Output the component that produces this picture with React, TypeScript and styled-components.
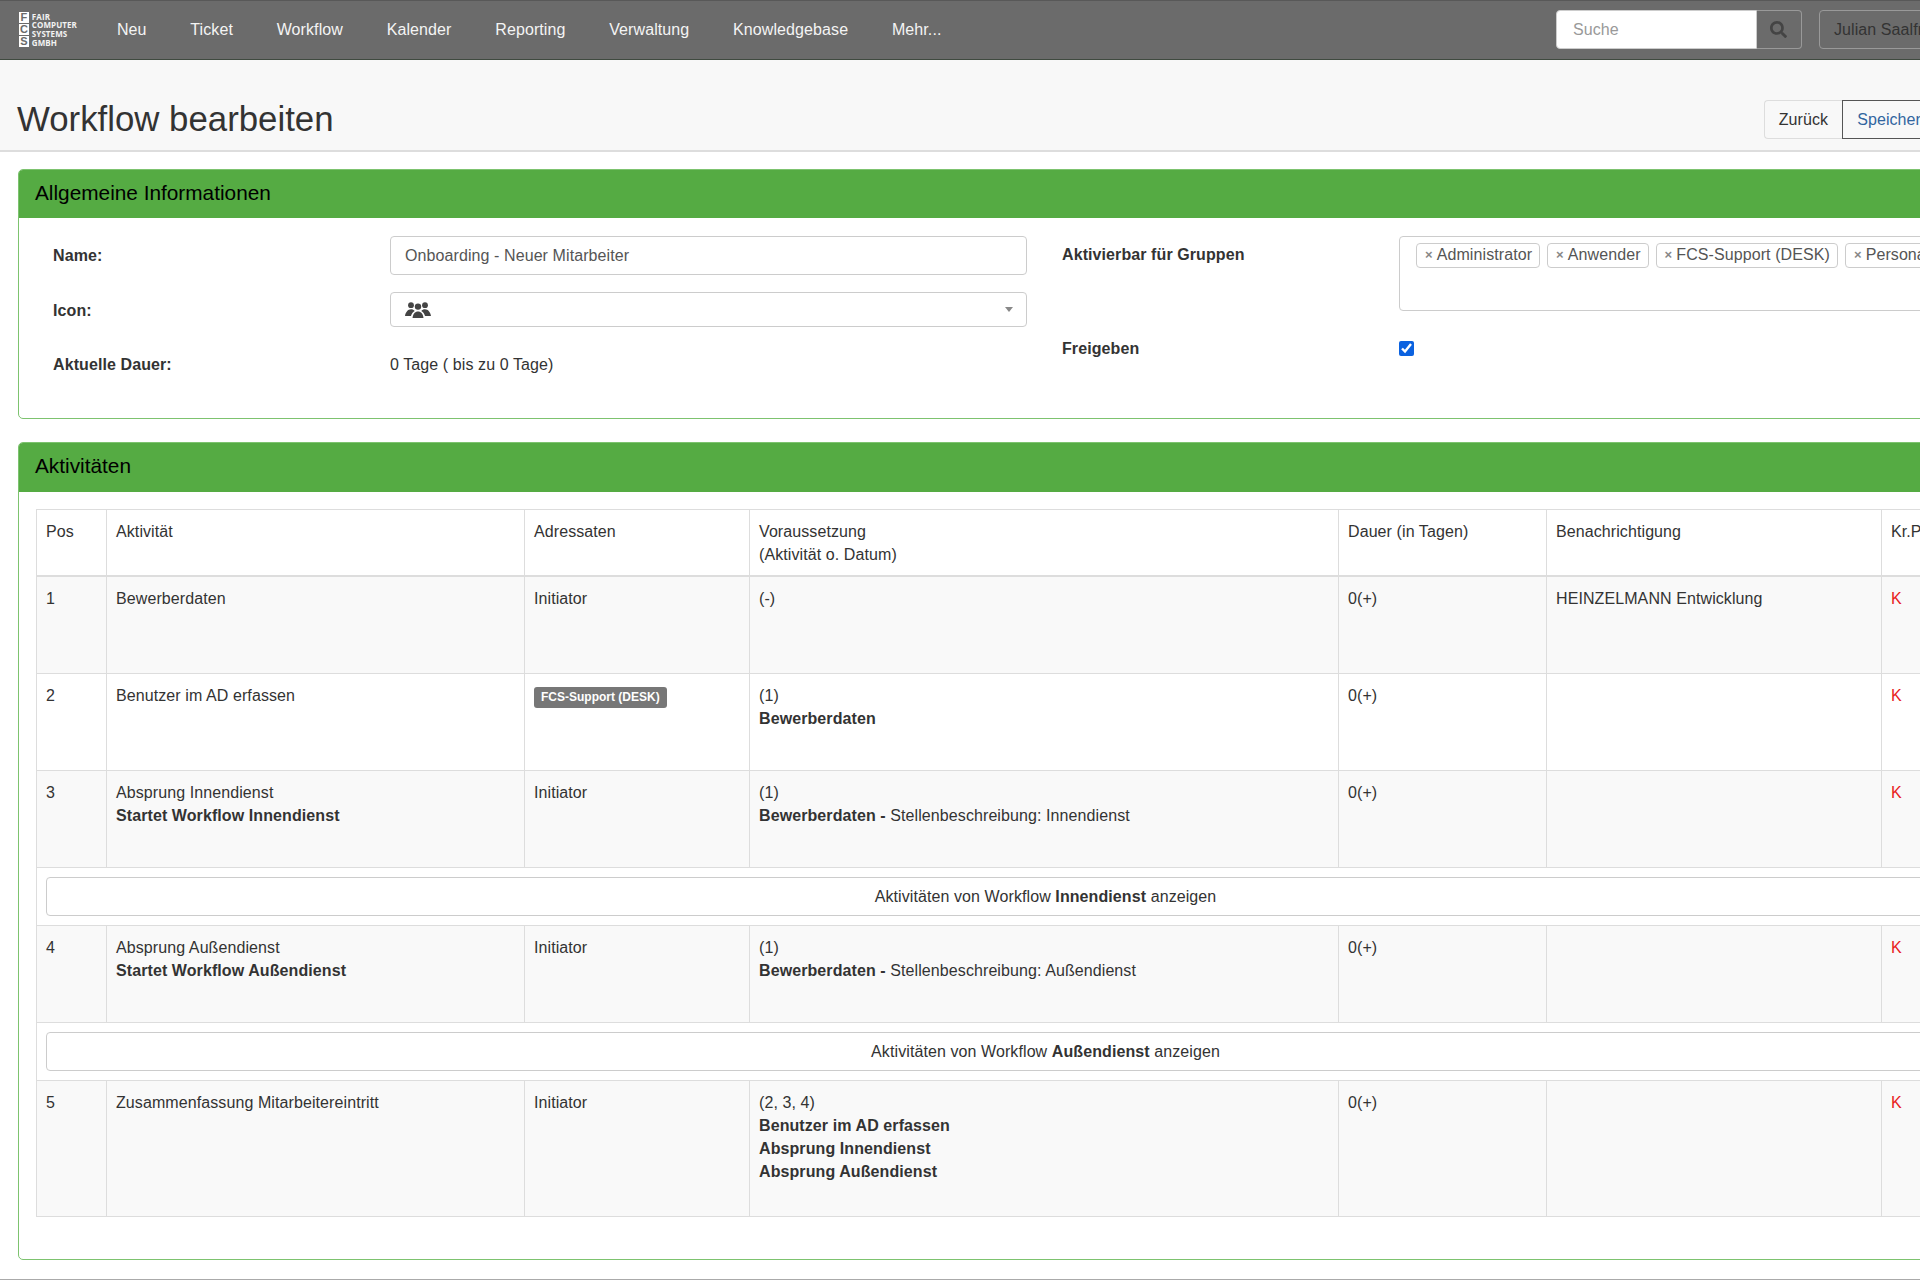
import React from "react";
import styled, { createGlobalStyle } from "styled-components";
import { FaSearch } from "react-icons/fa";

const GlobalStyle = createGlobalStyle`
  html, body {
    margin: 0;
    height: 1280px;
    overflow: hidden;
    background: #fff;
  }
  body {
    font-family: "Liberation Sans", Arial, sans-serif;
    font-size: 16px;
    line-height: 23px;
    letter-spacing: 0.09px;
    color: #333;
  }
  * { box-sizing: border-box; }
`;

const Page = styled.div`
  width: 2090px;
`;

const Navbar = styled.nav`
  display: flex;
  align-items: center;
  height: 60px;
  padding: 0 15px 1px 19px;
  background: #6b6b6b;
  border-top: 1px solid #585858;
  border-bottom: 1px solid #3f4a3f;
`;

const Logo = styled.div`
  display: flex;
  gap: 3px;
  width: 58px;
  margin-right: 18px;
`;

const LogoBlocks = styled.div`
  display: flex;
  flex-direction: column;
  width: 12px;
  gap: 1px;
`;

const LogoBlock = styled.span`
  display: block;
  height: 11px;
  background: #fff;
  color: #6b6b6b;
  font-size: 11px;
  line-height: 11px;
  font-weight: 700;
  text-align: center;
`;

const LogoText = styled.div`
  color: #f2f2f2;
  font-family: "Open Sans", sans-serif;
  font-size: 8px;
  line-height: 8.7px;
  font-weight: 700;
  white-space: nowrap;
  padding-top: 1px;
`;

const NavLink = styled.a`
  padding: 0 21.9px 1px;
  color: #f4f4f4;
  text-decoration: none;
`;

const NavRight = styled.div`
  display: flex;
  margin-left: auto;
`;

const SearchInput = styled.div`
  width: 201px;
  height: 39px;
  padding: 7px 16px;
  background: #fff;
  color: #999;
  border: 1px solid #ccc;
  border-radius: 4px 0 0 4px;
`;

const SearchButton = styled.div`
  display: flex;
  align-items: center;
  justify-content: center;
  width: 45px;
  height: 39px;
  color: #444;
  border: 1px solid #999;
  border-left: 0;
  border-radius: 0 4px 4px 0;
`;

const UserButton = styled.div`
  height: 39px;
  margin-left: 17px;
  padding: 7px 14px;
  color: #333;
  border: 1px solid #999;
  border-radius: 4px;
  white-space: nowrap;
`;

const PageHeader = styled.header`
  display: flex;
  align-items: center;
  justify-content: space-between;
  height: 92px;
  padding: 29px 145px 0 17px;
  background: #f8f8f8;
  border-bottom: 2px solid #ddd;
`;

const Title = styled.h1`
  margin: 0 0 2px;
  font-size: 34.8px;
  font-weight: 400;
  line-height: 40px;
  letter-spacing: 0;
  color: #333;
`;

const ButtonGroup = styled.div`
  display: flex;
`;

const HeaderButton = styled.div<{ $primary?: boolean }>`
  height: 39px;
  padding: 7px 14px;
  background: #f8f8f8;
  color: ${(p) => (p.$primary ? "#31659f" : "#333")};
  border: 1px solid ${(p) => (p.$primary ? "#555" : "#ddd")};
  border-radius: ${(p) => (p.$primary ? "0" : "4px 0 0 4px")};
  ${(p) => (p.$primary ? "" : "border-right: 0;")}
`;

const Panel = styled.section<{ $top: number }>`
  margin: ${(p) => p.$top}px 18px 0;
  border: 1px solid #7dc36f;
  border-radius: 5px;
  overflow: hidden;
`;

const PanelHeading = styled.div<{ $h: number }>`
  height: ${(p) => p.$h}px;
  padding: 11px 16px;
  background: #55ab43;
  color: #000;
  font-size: 20.8px;
  line-height: 24px;
  letter-spacing: 0;
`;

const FormBody = styled.div`
  display: grid;
  grid-template-columns: 974px 638px;
  column-gap: 35px;
  height: 200px;
  padding: 18px 0 0 34px;
`;

const FormColumn = styled.div`
  display: flex;
  flex-direction: column;
`;

const FormRow = styled.div<{ $gap?: number }>`
  display: grid;
  grid-template-columns: 337px 1fr;
  align-items: center;
  margin-bottom: ${(p) => p.$gap ?? 0}px;
`;

const FormLabel = styled.label<{ $top?: boolean; $shift?: number }>`
  font-weight: 700;
  align-self: ${(p) => (p.$top ? "start" : "center")};
  margin-top: ${(p) => (p.$top ? "7px" : `${p.$shift ?? 0}px`)};
`;

const TextInput = styled.div`
  height: 39px;
  padding: 7px 14px;
  color: #555;
  border: 1px solid #ccc;
  border-radius: 4px;
`;

const SelectBox = styled.div`
  display: flex;
  align-items: center;
  justify-content: space-between;
  height: 35px;
  padding: 0 13px 0 14px;
  color: #444;
  border: 1px solid #ccc;
  border-radius: 4px;
`;

const Caret = styled.span`
  width: 0;
  height: 0;
  border-left: 4px solid transparent;
  border-right: 4px solid transparent;
  border-top: 5px solid #888;
`;

const TagBox = styled.div`
  display: flex;
  align-items: flex-start;
  gap: 7px;
  height: 75px;
  padding: 6px 16px;
  border: 1px solid #ccc;
  border-radius: 4px;
`;

const Tag = styled.span`
  display: flex;
  align-items: center;
  gap: 4px;
  height: 25px;
  padding: 0 7px 2px 8px;
  color: #555;
  border: 1px solid #ccc;
  border-radius: 4px;
  white-space: nowrap;
`;

const TagRemove = styled.span`
  color: #888;
  font-size: 13px;
  font-weight: 700;
`;

const Checkbox = styled.input`
  width: 15px;
  height: 15px;
  margin: 0;
  accent-color: #0b62e0;
`;

const ActivityBody = styled.div`
  padding: 17px 17px 42px 17px;
`;

const Table = styled.table`
  width: 2018px;
  table-layout: fixed;
  border-collapse: collapse;
`;

const Col = styled.col<{ $w: number }>`
  width: ${(p) => p.$w}px;
`;

const HeadRow = styled.tr`
  height: 66px;
`;

const Th = styled.th`
  padding: 10px 9px 0;
  font-weight: 400;
  text-align: left;
  vertical-align: top;
  border: 1px solid #ddd;
  border-bottom: 2px solid #ddd;
`;

const Row = styled.tr<{ $striped?: boolean; $h: number }>`
  height: ${(p) => p.$h}px;
  background: ${(p) => (p.$striped ? "#f9f9f9" : "#fff")};
`;

const Td = styled.td`
  padding: 10px 9px 0;
  vertical-align: top;
  border: 1px solid #ddd;
`;

const SubCell = styled.td`
  padding: 9px;
  border: 1px solid #ddd;
`;

const WorkflowButton = styled.div`
  height: 39px;
  padding: 7px 0;
  text-align: center;
  background: #fff;
  border: 1px solid #ccc;
  border-radius: 4px;
`;

const Badge = styled.span`
  display: inline-block;
  height: 21px;
  margin-top: 1px;
  padding: 0 7px;
  background: #777;
  color: #fff;
  font-size: 12px;
  line-height: 20px;
  font-weight: 700;
  letter-spacing: 0;
  border-radius: 3px;
`;

const Critical = styled.span`
  color: #e8211d;
`;

const Footer = styled.footer`
  margin-top: 19px;
  height: 10px;
  border-top: 1px solid #aaa;
`;

const navItems = ["Neu", "Ticket", "Workflow", "Kalender", "Reporting", "Verwaltung", "Knowledgebase", "Mehr..."];
const groups = ["Administrator", "Anwender", "FCS-Support (DESK)", "Personalabteilung"];
const colWidths = [70, 418, 225, 589, 208, 335, 173];

// fa-users as it appears in the icon picker, wider and flatter than the package one
const UsersIcon: React.FC = () => (
  <svg width="26" height="16" viewBox="0 0 26 16" fill="currentColor">
    <circle cx="6" cy="3.2" r="2.9" />
    <circle cx="20" cy="3.2" r="2.9" />
    <circle cx="13" cy="4.6" r="3.2" />
    <path d="M0 14c.6-4 3-6.8 6-6.8 1.6 0 2.8.6 3.7 1.7C7.6 10.2 6.4 12 6 14z" />
    <path d="M26 14c-.6-4-3-6.8-6-6.8-1.6 0-2.8.6-3.7 1.7 2.1 1.3 3.3 3.1 3.7 5.1z" />
    <path d="M7.5 16c.3-4 2.5-6.6 5.5-6.6s5.2 2.6 5.5 6.6z" />
  </svg>
);

interface Activity {
  pos: number;
  name: string;
  starts?: string;
  addressee: React.ReactNode;
  prereq: string;
  prereqNames: string[];
  prereqNote?: string;
  notify?: string;
  height: number;
  striped: boolean;
  subWorkflow?: string;
}

const activities: Activity[] = [
  { pos: 1, name: "Bewerberdaten", addressee: "Initiator", prereq: "(-)", prereqNames: [], notify: "HEINZELMANN Entwicklung", height: 98, striped: true },
  { pos: 2, name: "Benutzer im AD erfassen", addressee: <Badge>FCS-Support (DESK)</Badge>, prereq: "(1)", prereqNames: ["Bewerberdaten"], height: 97, striped: false },
  {
    pos: 3,
    name: "Absprung Innendienst",
    starts: "Startet Workflow Innendienst",
    addressee: "Initiator",
    prereq: "(1)",
    prereqNames: ["Bewerberdaten"],
    prereqNote: "Stellenbeschreibung: Innendienst",
    height: 97,
    striped: true,
    subWorkflow: "Innendienst",
  },
  {
    pos: 4,
    name: "Absprung Außendienst",
    starts: "Startet Workflow Außendienst",
    addressee: "Initiator",
    prereq: "(1)",
    prereqNames: ["Bewerberdaten"],
    prereqNote: "Stellenbeschreibung: Außendienst",
    height: 97,
    striped: true,
    subWorkflow: "Außendienst",
  },
  {
    pos: 5,
    name: "Zusammenfassung Mitarbeitereintritt",
    addressee: "Initiator",
    prereq: "(2, 3, 4)",
    prereqNames: ["Benutzer im AD erfassen", "Absprung Innendienst", "Absprung Außendienst"],
    height: 136,
    striped: true,
  },
];

const ActivityRows: React.FC<{ item: Activity }> = ({ item }) => (
  <>
    <Row $striped={item.striped} $h={item.height}>
      <Td>{item.pos}</Td>
      <Td>
        {item.name}
        {item.starts && (
          <>
            <br />
            <b>{item.starts}</b>
          </>
        )}
      </Td>
      <Td>{item.addressee}</Td>
      <Td>
        {item.prereq}
        {item.prereqNames.map((n) => (
          <React.Fragment key={n}>
            <br />
            <b>{n}</b>
          </React.Fragment>
        ))}
        {item.prereqNote && (
          <>
            <b> - </b>
            {item.prereqNote}
          </>
        )}
      </Td>
      <Td>0(+)</Td>
      <Td>{item.notify}</Td>
      <Td>
        <Critical>K</Critical>
      </Td>
    </Row>
    {item.subWorkflow && (
      <tr>
        <SubCell colSpan={7}>
          <WorkflowButton>
            Aktivitäten von Workflow <b>{item.subWorkflow}</b> anzeigen
          </WorkflowButton>
        </SubCell>
      </tr>
    )}
  </>
);

const App: React.FC = () => {
  return (
    <Page>
      <GlobalStyle />
      <Navbar>
        <Logo>
          <LogoBlocks>
            <LogoBlock>F</LogoBlock>
            <LogoBlock>C</LogoBlock>
            <LogoBlock>S</LogoBlock>
          </LogoBlocks>
          <LogoText>
            FAIR
            <br />
            COMPUTER
            <br />
            SYSTEMS
            <br />
            GMBH
          </LogoText>
        </Logo>
        {navItems.map((item) => (
          <NavLink key={item}>{item}</NavLink>
        ))}
        <NavRight>
          <SearchInput>Suche</SearchInput>
          <SearchButton>
            <FaSearch size={17} />
          </SearchButton>
          <UserButton>Julian Saalfrank (Administrator)</UserButton>
        </NavRight>
      </Navbar>

      <PageHeader>
        <Title>Workflow bearbeiten</Title>
        <ButtonGroup>
          <HeaderButton>Zurück</HeaderButton>
          <HeaderButton $primary>Speichern</HeaderButton>
        </ButtonGroup>
      </PageHeader>

      <Panel $top={17}>
        <PanelHeading $h={48}>Allgemeine Informationen</PanelHeading>
        <FormBody>
          <FormColumn>
            <FormRow $gap={17}>
              <FormLabel>Name:</FormLabel>
              <TextInput>Onboarding - Neuer Mitarbeiter</TextInput>
            </FormRow>
            <FormRow $gap={26}>
              <FormLabel $shift={2}>Icon:</FormLabel>
              <SelectBox>
                <UsersIcon />
                <Caret />
              </SelectBox>
            </FormRow>
            <FormRow>
              <FormLabel>Aktuelle Dauer:</FormLabel>
              <span>0 Tage ( bis zu 0 Tage)</span>
            </FormRow>
          </FormColumn>
          <FormColumn>
            <FormRow $gap={26}>
              <FormLabel $top>Aktivierbar für Gruppen</FormLabel>
              <TagBox>
                {groups.map((g) => (
                  <Tag key={g}>
                    <TagRemove>×</TagRemove>
                    {g}
                  </Tag>
                ))}
              </TagBox>
            </FormRow>
            <FormRow>
              <FormLabel>Freigeben</FormLabel>
              <Checkbox type="checkbox" checked readOnly />
            </FormRow>
          </FormColumn>
        </FormBody>
      </Panel>

      <Panel $top={23}>
        <PanelHeading $h={49}>Aktivitäten</PanelHeading>
        <ActivityBody>
          <Table>
            <colgroup>
              {colWidths.map((w, i) => (
                <Col key={i} $w={w} />
              ))}
            </colgroup>
            <thead>
              <HeadRow>
                <Th>Pos</Th>
                <Th>Aktivität</Th>
                <Th>Adressaten</Th>
                <Th>
                  Voraussetzung
                  <br />
                  (Aktivität o. Datum)
                </Th>
                <Th>Dauer (in Tagen)</Th>
                <Th>Benachrichtigung</Th>
                <Th>Kr.Pfad</Th>
              </HeadRow>
            </thead>
            <tbody>
              {activities.map((a) => (
                <ActivityRows key={a.pos} item={a} />
              ))}
            </tbody>
          </Table>
        </ActivityBody>
      </Panel>
      <Footer />
    </Page>
  );
};

export default App;
